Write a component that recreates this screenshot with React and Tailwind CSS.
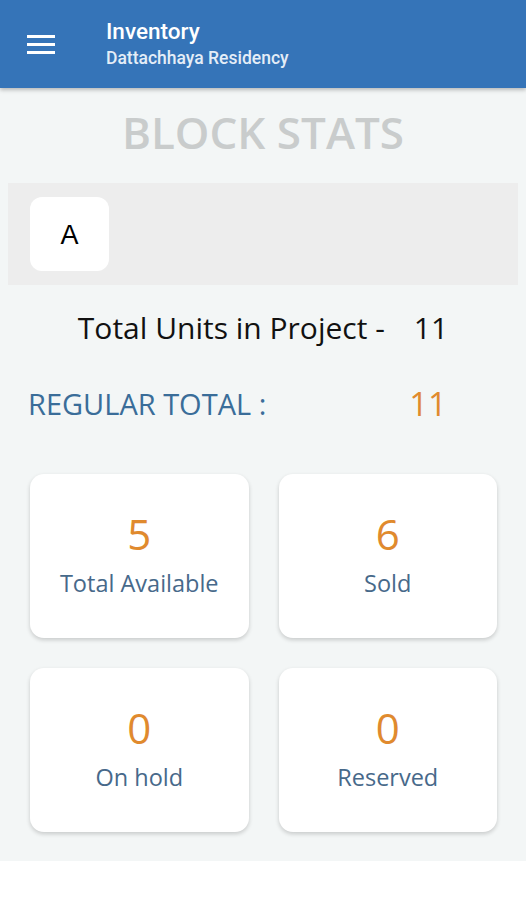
import React from 'react';

function StatCard({ value, label }) {
    return (
        <div className="h-[164px] bg-white rounded-[14px] shadow-[0_2px_4px_rgba(0,0,0,0.18)] flex flex-col items-center pt-[36px]">
            <div className="text-[42px] leading-[48px] text-[#e08a2e]">{value}</div>
            <div className="mt-[10px] text-[23.5px] leading-[30px] text-[#47698a]">{label}</div>
        </div>
    );
}

export default function App() {
    return (
        <div className="min-h-[900px] bg-white font-['Open_Sans',sans-serif]">
            {/* Header */}
            <header className="relative z-10 h-[88px] bg-[#3574b8] shadow-[0_2px_4px_rgba(0,0,0,0.25)] flex items-center font-['Roboto',sans-serif]">
                <div className="w-[106px] pl-[27px]">
                    <svg width="28" height="22" viewBox="0 0 28 22">
                        <rect x="0" y="2" width="28" height="3" fill="white" />
                        <rect x="0" y="10" width="28" height="3" fill="white" />
                        <rect x="0" y="18" width="28" height="3" fill="white" />
                    </svg>
                </div>
                <div className="flex flex-col text-white">
                    <span className="text-[22.5px] leading-[28px] font-medium">Inventory</span>
                    <span className="text-[17.5px] leading-[26px] font-medium text-[#e4edf7]">Dattachhaya Residency</span>
                </div>
            </header>

            <main className="bg-[#f3f6f6] pb-[29px]">
                <h1 className="pt-[14px] h-[95px] text-center text-[44px] leading-[60px] font-semibold text-[#c9cccc]">
                    BLOCK STATS
                </h1>

                {/* Block tabs */}
                <div className="mx-[8px] h-[102px] bg-[#ededed] flex items-center px-[22px]">
                    <div className="w-[79px] h-[74px] bg-white rounded-[12px] flex items-center justify-center pt-[3px] text-[27px] text-black font-['Liberation_Sans',sans-serif]">
                        A
                    </div>
                </div>

                <div className="mt-[23px] flex justify-center items-center text-[30px] leading-[40px] text-[#111]">
                    <span>Total Units in Project -</span>
                    <span className="ml-[29px]">11</span>
                </div>

                <div className="mt-[36px] flex items-center px-[28px] leading-[40px]">
                    <span className="text-[29px] text-[#3a6d99]">REGULAR TOTAL :</span>
                    <span className="ml-auto mr-[51px] text-[33px] text-[#e08a2e]">11</span>
                </div>

                <div className="mt-[50px] grid grid-cols-2 gap-x-[30px] gap-y-[30px] pl-[30px] pr-[29px]">
                    <StatCard value="5" label="Total Available" />
                    <StatCard value="6" label="Sold" />
                    <StatCard value="0" label="On hold" />
                    <StatCard value="0" label="Reserved" />
                </div>
            </main>
        </div>
    );
}
